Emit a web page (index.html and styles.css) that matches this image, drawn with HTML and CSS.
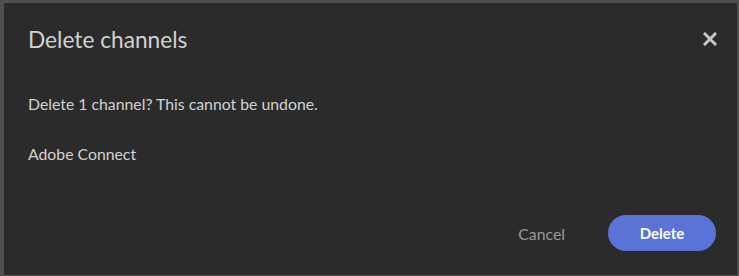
FILE: index.html
```html
<!DOCTYPE html>
<html>
<head>
<meta charset="utf-8">
<link rel="stylesheet" href="styles.css">
</head>
<body>
<div class="dialog">
  <div class="header">
    <h1 class="title">Delete channels</h1>
    <button class="close" aria-label="Close">
      <svg width="14" height="14" viewBox="0 0 14 14"><path d="M2 2 L12 12 M12 2 L2 12" stroke="#c6c6c6" stroke-width="3" stroke-linecap="square"/></svg>
    </button>
  </div>
  <div class="content">
    <p class="msg">Delete 1 channel? This cannot be undone.</p>
    <p class="msg">Adobe Connect</p>
  </div>
  <div class="footer">
    <button class="btn-cancel">Cancel</button>
    <button class="btn-delete">Delete</button>
  </div>
</div>
</body>
</html>
```
FILE: styles.css
```css
html, body {
  margin: 0;
  height: 100%;
}
body {
  background: #4f4f4f;
  padding: 3px 2px 1px 4px;
  box-sizing: border-box;
  font-family: Lato, "Open Sans", sans-serif;
}
.dialog {
  background: #2b2b2b;
  height: 100%;
  display: flex;
  flex-direction: column;
  box-sizing: border-box;
  padding: 0 20px 0 24px;
}
.header {
  display: flex;
  align-items: center;
  justify-content: space-between;
  height: 72px;
}
.title {
  margin: 0;
  font-size: 22.7px;
  font-weight: 400;
  color: #d2d2d2;
}
.close {
  background: none;
  border: 0;
  padding: 0;
  width: 14px;
  height: 14px;
  display: flex;
}
.content {
  flex: 1;
  padding-top: 19px;
}
.msg {
  margin: 0 0 31px;
  font-size: 15.8px;
  color: #d2d2d2;
  line-height: 19px;
}
.footer {
  display: flex;
  justify-content: flex-end;
  align-items: center;
  gap: 43px;
  padding: 0 1px 24px 0;
}
.btn-cancel {
  background: none;
  border: 0;
  font: inherit;
  font-size: 15.8px;
  color: #9a9a9a;
  padding: 0;
}
.btn-delete {
  font: inherit;
  font-size: 15px;
  font-weight: 700;
  color: #fff;
  background: #5b72d6;
  border: 0;
  border-radius: 18px;
  width: 108px;
  height: 36px;
}
```
